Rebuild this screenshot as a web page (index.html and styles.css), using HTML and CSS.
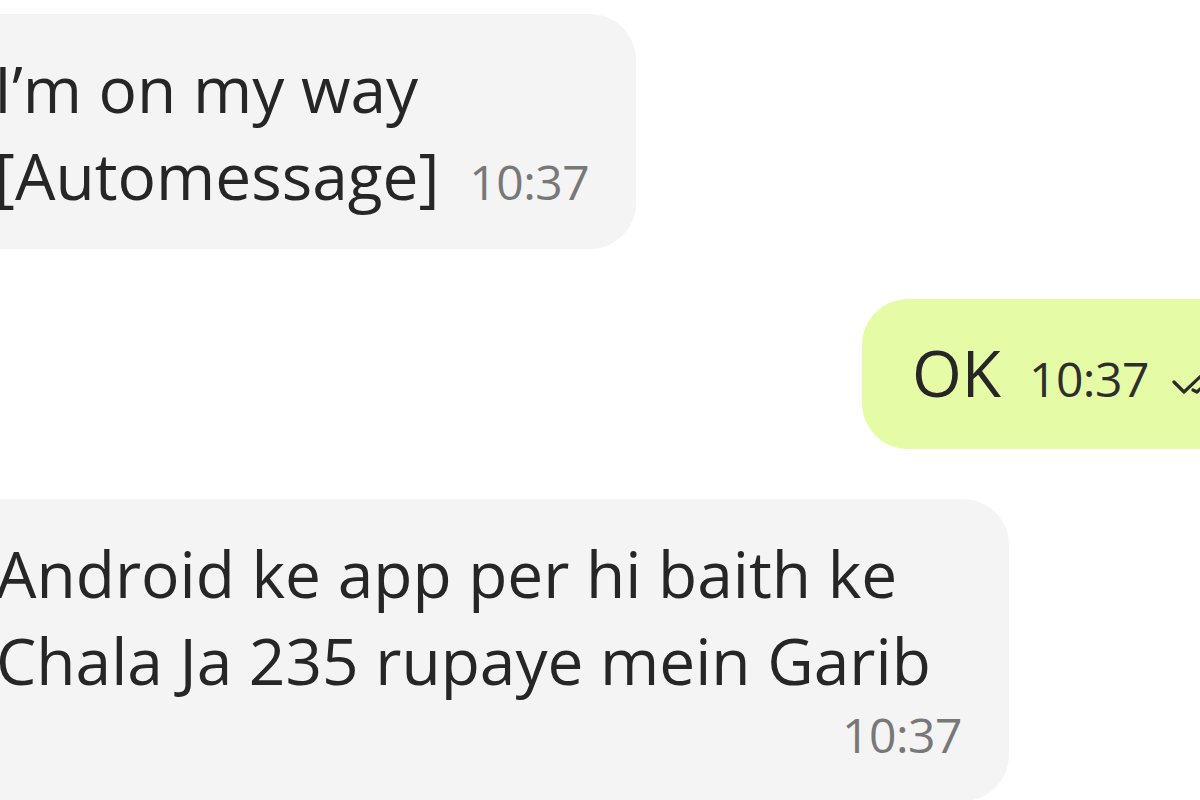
FILE: index.html
```html
<!DOCTYPE html>
<html lang="en">
<head>
    <meta charset="UTF-8" />
    <title>Chat</title>
    <link rel="stylesheet" href="styles.css">
</head>
<body>
    <div class="chat">
        <div class="msg in first">
            <p class="text">I’m on my way<br>[Automessage]<span class="time">10:37</span></p>
        </div>

        <div class="msg out">
            <p class="text">OK<span class="time">10:37</span><svg class="tick" width="60" height="30" viewBox="0 0 60 30">
                    <path d="M3 9 L13 19 L32 1 M22 17 L26 19 L45 1" fill="none" stroke="#2a2a2a" stroke-width="3.2" stroke-linecap="round" stroke-linejoin="round" />
                </svg></p>
        </div>

        <div class="msg in last">
            <p class="text">Android ke app per hi baith ke<br>Chala Ja 235 rupaye mein Garib</p>
            <span class="time block">10:37</span>
        </div>
    </div>
</body>
</html>
```

FILE: styles.css
```css
* {
    margin: 0;
    padding: 0;
    box-sizing: border-box;
}

html, body {
    width: 1200px;
    height: 800px;
    overflow: hidden;
    background: #ffffff;
    font-family: "Open Sans", "Noto Sans", sans-serif;
    color: #262626;
}

.chat {
    display: flex;
    flex-direction: column;
    padding-top: 14px;
    gap: 50px;
}

.msg {
    border-radius: 46px;
}

/* incoming bubbles run off the left edge */
.msg.in {
    align-self: flex-start;
    background: #f4f4f4;
    margin-left: -70px;
    padding: 31px 40px 24px 64px;
}

.msg.first {
    width: 706px;
}

.msg.last {
    width: 1075px;
    margin-left: -66px;
    padding-left: 62px;
    padding-bottom: 38px;
}

.msg.out {
    align-self: flex-end;
    background: #e6fba6;
    margin-right: -80px;
    padding: 42px 0 38px 50px;
    width: 418px;
}

.text {
    font-size: 64px;
    font-weight: 500;
    line-height: 87px;
    white-space: nowrap;
}

.time {
    font-size: 48px;
    font-weight: 400;
    color: #787878;
    margin-left: 30px;
    letter-spacing: -0.5px;
}

.msg.out .text {
    line-height: 64px;
}

.msg.out .time {
    color: #2e2e2e;
    margin-left: 28px;
}

.tick {
    vertical-align: -6px;
    margin-left: 22px;
}

.time.block {
    display: block;
    text-align: right;
    line-height: 56px;
    margin-top: 3px;
    margin-right: 7px;
}
```
